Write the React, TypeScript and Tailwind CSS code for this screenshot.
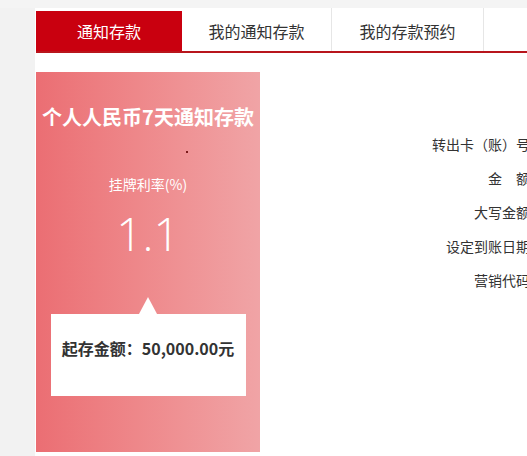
import React from "react";

const cjk = { fontFamily: '"Microsoft YaHei", "Noto Sans CJK SC", "Noto Sans", sans-serif' };

export default function App() {
  const labels = ["转出卡（账）号", "金\u3000额", "大写金额", "设定到账日期", "营销代码"];
  return (
    <div className="w-[527px] h-[456px] overflow-hidden bg-[#f2f2f2]" style={cjk}>
      <div className="h-[8px] bg-[#f4f4f4]" />
      <div className="ml-[35px] w-[620px] h-[448px] bg-white pl-px">
        <div className="flex items-end h-[45px] border-b-2 border-[#b8151c]">
          <div className="w-[146px] h-[40px] bg-[#c9000f] text-white text-[16px] flex items-center justify-center">
            通知存款
          </div>
          <div className="w-[150px] h-[43px] border-r border-[#e6e6e6] text-[#333] text-[16px] flex items-center justify-center pt-[3px]">
            我的通知存款
          </div>
          <div className="w-[152px] h-[43px] border-r border-[#e6e6e6] text-[#333] text-[16px] flex items-center justify-center pt-[3px]">
            我的存款预约
          </div>
        </div>
        <div className="flex pt-[19px]">
          <div className="w-[224px] shrink-0 h-[380px] bg-gradient-to-r from-[#eb6e73] to-[#f0a4a6] flex flex-col items-center">
            <div className="mt-[33px] text-white text-[20px] font-bold leading-[24px]">
              个人人民币7天通知存款
            </div>
            <div className="mt-[22px] ml-[78px] w-[2px] h-[2px] bg-[#7a1a1a]" />
            <div className="mt-[22px] text-white text-[14px] leading-[18px]">挂牌利率(%)</div>
            <div
              className="mt-[16px] text-white text-[46px] leading-[48px] font-light"
              style={{ fontFamily: '"Open Sans", "Noto Sans", sans-serif' }}
            >
              1.1
            </div>
            <div className="mt-[40px] flex flex-col items-center">
              <div className="w-0 h-0 border-l-[9px] border-r-[9px] border-b-[17px] border-l-transparent border-r-transparent border-b-white" />
              <div className="w-[195px] h-[82px] bg-white flex pt-[24px] justify-center text-[#333] text-[16px] font-bold leading-[20px]">
                起存金额：50,000.00元
              </div>
            </div>
          </div>
          <div className="w-[270px] shrink-0 pt-[62px] flex flex-col items-end text-[14px] text-[#333] leading-[20px] gap-[14px]">
            {labels.map((l) => (
              <div key={l} className="whitespace-nowrap">{l}</div>
            ))}
          </div>
        </div>
      </div>
    </div>
  );
}
